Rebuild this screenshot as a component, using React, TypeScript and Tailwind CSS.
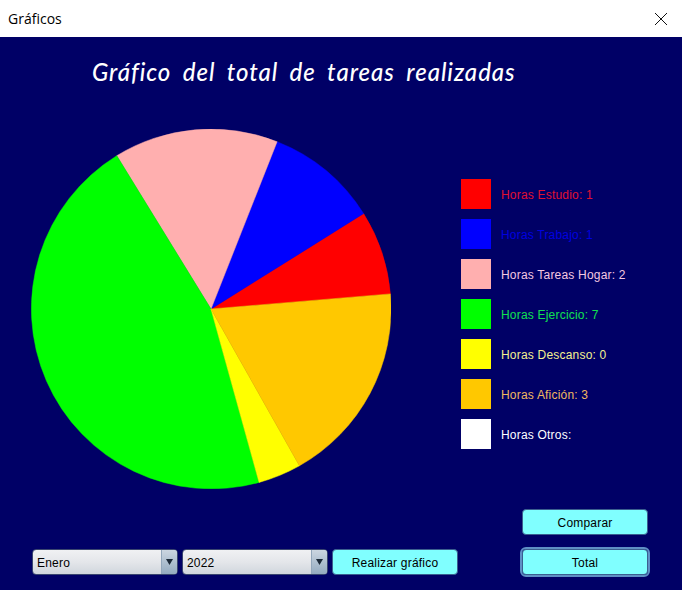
const slices = [
	{ color: "#ff0000", d: "M180 180 L359.4 164.9 A180 180 0 0 0 332.6 84.6 Z" },
	{ color: "#0000ff", d: "M180 180 L332.6 84.6 A180 180 0 0 0 246.1 12.7 Z" },
	{ color: "#ffafaf", d: "M180 180 L246.1 12.7 A180 180 0 0 0 85.8 26.7 Z" },
	{ color: "#00ff00", d: "M180 180 L85.8 26.7 A180 180 0 0 0 228.1 353.4 Z" },
	{ color: "#ffff00", d: "M180 180 L228.1 353.4 A180 180 0 0 0 268.4 336.8 Z" },
	{ color: "#ffc800", d: "M180 180 L268.4 336.8 A180 180 0 0 0 359.4 164.9 Z" },
];

const legend = [
	{ label: "Horas Estudio: 1", box: "bg-[#ff0000]", text: "text-[#e01030]" },
	{ label: "Horas Trabajo: 1", box: "bg-[#0000ff]", text: "text-[#0000e0]" },
	{ label: "Horas Tareas Hogar: 2", box: "bg-[#ffafaf]", text: "text-[#f4c8e0]" },
	{ label: "Horas Ejercicio: 7", box: "bg-[#00ff00]", text: "text-[#10e050]" },
	{ label: "Horas Descanso: 0", box: "bg-[#ffff00]", text: "text-[#f4f090]" },
	{ label: "Horas Afición: 3", box: "bg-[#ffc800]", text: "text-[#f0b860]" },
	{ label: "Horas Otros:", box: "bg-white", text: "text-white" },
];

function Combo({ value }: { value: string }) {
	return (
		<div className="flex h-[26px] w-[146px] overflow-hidden rounded-[4px] border border-[#39456f] bg-gradient-to-b from-[#f0f1f3] via-[#e4e6ea] to-[#d0d6dd]">
			<span className="flex-1 pl-1 pt-px text-[12px] leading-[24px] tracking-[0.2px] text-black">{value}</span>
			<span className="flex w-4 items-center justify-center border-l border-[#93a7bb] bg-gradient-to-b from-[#ccd6e0] to-[#94abc0]">
				<svg width="7" height="6" viewBox="0 0 7 6">
					<path d="M0 0 H7 L3.5 6 Z" fill="#1c2a38" />
				</svg>
			</span>
		</div>
	);
}

function Button({ label, focused }: { label: string; focused?: boolean }) {
	return (
		<button
			className={
				"h-[26px] w-[126px] rounded-[4px] border border-[#3a5f8f] bg-[#80ffff] pt-px text-[12px] tracking-[0.2px] text-black" +
				(focused ? " outline-2 outline-[#5f8fc4]" : "")
			}
		>
			{label}
		</button>
	);
}

export default function App() {
	return (
		<div className="h-[590px] w-[682px] overflow-hidden font-['Liberation_Sans',sans-serif]">
			<div className="flex h-[37px] items-center justify-between bg-white pl-2 pr-[15px]">
				<span className="font-['Open_Sans',sans-serif] text-[14px] text-black">Gráficos</span>
				<svg width="12" height="12" viewBox="0 0 12 12" fill="none" stroke="#111" strokeWidth="1">
					<path d="M0 0 L12 12 M12 0 L0 12" />
				</svg>
			</div>
			<main className="flex h-[553px] flex-col bg-[#000066]">
				<h1 className="h-[92px] pl-[92px] pt-[19px] font-['Lato',sans-serif] text-[24px] font-medium italic leading-[32px] tracking-[0.95px] text-white [word-spacing:5px]">
					Gráfico del total de tareas realizadas
				</h1>
				<div className="flex pl-[31px]">
					<svg width="360" height="360" viewBox="0 0 360 360" className="shrink-0">
						{slices.map((s) => (
							<path key={s.color} d={s.d} fill={s.color} stroke={s.color} strokeWidth="0.5" />
						))}
					</svg>
					<ul className="ml-[70px] mt-[50px] flex flex-col gap-[10px]">
						{legend.map((item) => (
							<li key={item.label} className="flex items-center gap-[10px]">
								<span className={"h-[30px] w-[30px] " + item.box} />
								<span className={"pt-[2px] text-[12px] tracking-[0.2px] " + item.text}>{item.label}</span>
							</li>
						))}
					</ul>
				</div>
				<div className="mt-5 flex items-end pl-8">
					<div className="flex gap-1">
						<Combo value="Enero" />
						<Combo value="2022" />
						<Button label="Realizar gráfico" />
					</div>
					<div className="ml-16 flex flex-col gap-[14px]">
						<Button label="Comparar" />
						<Button label="Total" focused />
					</div>
				</div>
			</main>
		</div>
	);
}
